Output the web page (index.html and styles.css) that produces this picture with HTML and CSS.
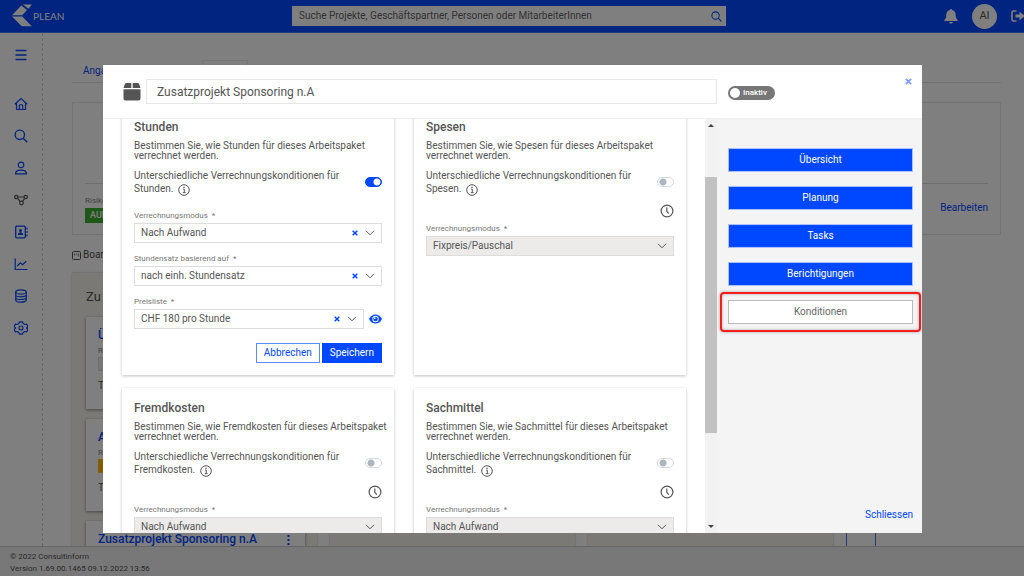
FILE: index.html
```html
<!DOCTYPE html>
<html lang="de">
<head>
<meta charset="utf-8">
<title>PLEAN</title>
<link rel="stylesheet" href="styles.css">
</head>
<body>
<svg class="sprite" aria-hidden="true">
  <symbol id="chevron" viewBox="0 0 10 6"><path d="M1 .8l4 4 4-4" fill="none" stroke="currentColor"/></symbol>
  <symbol id="cross" viewBox="0 0 6 6"><path d="M.7.7l4.6 4.6M5.3.7L.7 5.3" fill="none" stroke="currentColor" stroke-width="1.5"/></symbol>
  <symbol id="info" viewBox="0 0 12 12"><circle cx="6" cy="6" r="5.3" fill="none" stroke="currentColor"/><path d="M5 5.1h1.3v3.4M4.8 8.6h2.8" fill="none" stroke="currentColor"/><circle cx="6" cy="3.3" r=".8" fill="currentColor"/></symbol>
  <symbol id="clock" viewBox="0 0 14 14"><circle cx="7" cy="7" r="5.9" fill="none" stroke="currentColor" stroke-width="1.2"/><path d="M6.8 3.4v3.9l2 2.3" fill="none" stroke="currentColor" stroke-width="1.2"/></symbol>
  <symbol id="search" viewBox="0 0 14 14"><circle cx="5.8" cy="5.8" r="4.7" fill="none" stroke="currentColor" stroke-width="1.3"/><path d="M9.2 9.2l4 4" stroke="currentColor" stroke-width="1.4"/></symbol>
</svg>
<div class="app">
  <header class="topbar">
    <a class="brand" href="#">
      <svg class="logo" viewBox="0 0 20 24"><path d="M11 .5h9l-3.600 4.200zM9.300 1.400l5.700 4.600-4.800 5.200H0zM0 12.600h10.200l9.600 9.700H9.800z" fill="currentColor"/></svg>
      PLEAN
    </a>
    <form class="search">
      <input class="search-input" type="search" aria-label="Suche" placeholder="Suche Projekte, Geschäftspartner, Personen oder MitarbeiterInnen">
      <button class="search-button" type="button" aria-label="Suchen"><svg class="search-icon"><use href="#search"/></svg></button>
    </form>
    <div class="account">
      <button class="plain" type="button" aria-label="Benachrichtigungen"><svg class="bell" viewBox="0 0 14 15"><path d="M7 0c.6 0 1 .4 1 1 2.500.5 3.700 2.300 3.700 4.700 0 3 .8 4 1.800 5 .4.500.200 1.300-.6 1.300H1.100c-.8 0-1-.8-.6-1.300 1-1 1.800-2 1.800-5C2.300 3.300 3.500 1.500 6 1c0-.6.400-1 1-1zM5.200 13h3.600c-.2 2-3.400 2-3.600 0z" fill="currentColor"/></svg></button>
      <button class="avatar" type="button">AI</button>
      <button class="plain" type="button" aria-label="Abmelden"><svg class="logout" viewBox="0 0 13 12"><path d="M5.500 1H2.200C1.500 1 1 1.500 1 2.200v7.600c0 .7.500 1.200 1.200 1.200h3.300" fill="none" stroke="currentColor" stroke-width="1.600"/><path d="M4.500 4.500h4V1.700L14 6l-5.500 4.300V7.500h-4z" fill="currentColor"/></svg></button>
    </div>
  </header>
  <div class="workspace">
    <nav class="sidebar" aria-label="Hauptmenü">
      <a class="nav-item nav-menu" href="#" aria-label="Menü"><svg class="nav-icon" viewBox="0 0 14 14"><path d="M1.500 2.500h11M1.500 7h11M1.500 11.500h11" stroke="currentColor" stroke-width="1.300"/></svg></a>
      <a class="nav-item" href="#" aria-label="Start"><svg class="nav-icon" viewBox="0 0 14 14"><path d="M.8 7.200L7 1.500l6.200 5.700M2.500 6v6.500h9V6M5.300 12.500V9c0-2 3.400-2 3.400 0v3.500" fill="none" stroke="currentColor" stroke-width="1.200"/></svg></a>
      <a class="nav-item" href="#" aria-label="Suche"><svg class="nav-icon"><use href="#search"/></svg></a>
      <a class="nav-item" href="#" aria-label="Personen"><svg class="nav-icon" viewBox="0 0 14 14"><circle cx="7" cy="3.900" r="2.800" fill="none" stroke="currentColor" stroke-width="1.200"/><path d="M1.500 12.900c0-5 11-5 11 0z" fill="none" stroke="currentColor" stroke-width="1.200" stroke-linejoin="round"/></svg></a>
      <a class="nav-item nav-muted" href="#" aria-label="Prozesse"><svg class="nav-icon" viewBox="0 0 14 14"><g fill="none" stroke="currentColor" stroke-width="1.200"><circle cx="2.300" cy="4" r="1.700"/><circle cx="11.700" cy="4" r="1.700"/><circle cx="7.500" cy="10" r="1.800"/><path d="M4.200 4h5.600M3.600 5.300l2.700 3.300M10.600 5.300L8.600 8.500"/></g></svg></a>
      <a class="nav-item" href="#" aria-label="Kontakte"><svg class="nav-icon" viewBox="0 0 14 14"><rect x="1.700" y="1.200" width="9.600" height="11.600" rx="1" fill="none" stroke="currentColor" stroke-width="1.300"/><circle cx="6.500" cy="5.400" r="1.500" fill="currentColor"/><path d="M3.800 10c0-3.800 5.400-3.800 5.400 0z" fill="currentColor"/><path d="M13 2.500v2M13 6v2M13 9.500v2" stroke="currentColor" stroke-width="1.200"/></svg></a>
      <a class="nav-item" href="#" aria-label="Berichte"><svg class="nav-icon" viewBox="0 0 14 14"><path d="M1.200 1.500v11h12.300M3.300 9l3-3.200 2.200 1.800 3.800-3.400" fill="none" stroke="currentColor" stroke-width="1.200"/></svg></a>
      <a class="nav-item" href="#" aria-label="Daten"><svg class="nav-icon" viewBox="0 0 14 14"><g fill="none" stroke="currentColor" stroke-width="1.200"><ellipse cx="7" cy="3" rx="5.300" ry="2.200"/><path d="M1.700 3v8c0 2.800 10.600 2.800 10.600 0V3M1.700 5.700c0 2.800 10.600 2.800 10.600 0M1.700 8.400c0 2.800 10.600 2.800 10.600 0"/></g></svg></a>
      <a class="nav-item" href="#" aria-label="Einstellungen"><svg class="nav-icon" viewBox="0 0 14 14"><path d="M5.500.8h3l.6 1.800 1.600.9 1.900-.5 1.200 2.600L12.500 7l1.300 1.400-1.200 2.600-1.900-.5-1.600.9-.6 1.800h-3l-.6-1.800-1.600-.9-1.900.5L.2 8.400 1.500 7 .2 5.600 1.400 3l1.900.5 1.600-.9z" fill="none" stroke="currentColor" stroke-width="1.200" stroke-linejoin="round"/><circle cx="7" cy="7" r="2" fill="none" stroke="currentColor" stroke-width="1.200"/></svg></a>
    </nav>
    <main class="project">
      <div class="tabs"><a class="tab" href="#">Angaben</a><span class="tab-active"></span></div>
      <section class="summary">
        <div class="summary-space"></div>
        <div class="summary-row">
          <div><div class="risk-label">Risiko</div><div class="badge">AUF</div></div>
          <a class="edit" href="#">Bearbeiten</a>
        </div>
      </section>
      <div class="board-title"><svg class="board-icon" viewBox="0 0 9 9"><rect x=".5" y=".5" width="8" height="8" rx="1" fill="none" stroke="currentColor"/><path d="M2.700 2.500v2M4.500 2.500v1M6.300 2.500v3" stroke="currentColor" stroke-width=".8"/></svg>Board</div>
      <div class="board">
        <div class="lane">
          <h2 class="lane-title">Zu tun</h2>
          <article class="task"><a class="task-title" href="#">Ü</a><span class="task-risk">R</span><span class="chip"></span><span class="task-note">T</span></article>
          <article class="task"><a class="task-title" href="#">A</a><span class="task-risk">R</span><span class="chip chip-warn"></span><span class="task-note">T</span></article>
          <article class="task"><a class="task-title" href="#">Zusatzprojekt Sponsoring n.A</a><svg class="dots" viewBox="0 0 3 10"><path d="M.5 0h2v2h-2zM.5 4h2v2h-2zM.5 8h2v2h-2z" fill="currentColor"/></svg></article>
        </div>
        <div class="lane"></div>
        <div class="lane"></div>
        <div class="add-lane"></div>
      </div>
    </main>
  </div>
  <footer class="footer"><div>© 2022 Consultinform</div><div>Version 1.69.00.1465 09.12.2022 13:56</div></footer>
</div>

<div class="backdrop">
  <div class="dialog" role="dialog" aria-modal="true" aria-label="Arbeitspaket">
    <header class="dialog-head">
      <svg class="package" viewBox="0 0 18 18"><path d="M3.500 0h4.800v5H.5L1.800 1.300C2.100.5 2.700 0 3.500 0zM9.700 0h4.800c.8 0 1.400.5 1.700 1.300L17.500 5H9.700zM.5 6.200h17v9.300c0 1.300-.8 2-2 2h-13c-1.200 0-2-.7-2-2z" fill="currentColor"/></svg>
      <input class="name-input" type="text" aria-label="Name" value="Zusatzprojekt Sponsoring n.A">
      <label class="status"><input class="status-input" type="checkbox">Inaktiv</label>
      <button class="plain close" type="button" aria-label="Dialog schliessen"><svg class="cross-large"><use href="#cross"/></svg></button>
    </header>
    <div class="dialog-body">
      <div class="scroll-area">
        <div class="cards">
          <section class="card">
            <h3 class="card-title">Stunden</h3>
            <p class="card-text">Bestimmen Sie, wie Stunden für dieses Arbeitspaket verrechnet werden.</p>
            <div class="option"><label class="option-label" for="t1">Unterschiedliche Verrechnungskonditionen für Stunden. <svg class="info"><use href="#info"/></svg></label><input class="switch" id="t1" type="checkbox" checked></div>
            <div class="field">
              <label class="field-label" for="s1">Verrechnungsmodus&nbsp; *</label>
              <div class="combo"><select class="combo-select" id="s1"><option>Nach Aufwand</option></select><button class="plain" type="button" aria-label="Leeren"><svg class="cross"><use href="#cross"/></svg></button><svg class="chevron"><use href="#chevron"/></svg></div>
            </div>
            <div class="field">
              <label class="field-label" for="s2">Stundensatz basierend auf&nbsp; *</label>
              <div class="combo"><select class="combo-select" id="s2"><option>nach einh. Stundensatz</option></select><button class="plain" type="button" aria-label="Leeren"><svg class="cross"><use href="#cross"/></svg></button><svg class="chevron"><use href="#chevron"/></svg></div>
            </div>
            <div class="field">
              <label class="field-label" for="s3">Preisliste&nbsp; *</label>
              <div class="combo-row">
                <div class="combo"><select class="combo-select" id="s3"><option>CHF 180 pro Stunde</option></select><button class="plain" type="button" aria-label="Leeren"><svg class="cross"><use href="#cross"/></svg></button><svg class="chevron"><use href="#chevron"/></svg></div>
                <button class="plain" type="button" aria-label="Preisliste anzeigen"><svg class="eye" viewBox="0 0 13 10"><path d="M0 5C2.800-1 10.200-1 13 5 10.200 11 2.800 11 0 5z" fill="currentColor"/><circle cx="6.500" cy="5" r="3.200" fill="#fff"/><circle cx="6.500" cy="5" r="2.300" fill="currentColor"/><circle cx="5.700" cy="4.200" r=".9" fill="#fff"/></svg></button>
              </div>
            </div>
            <div class="actions"><button class="button button-outline" type="button">Abbrechen</button><button class="button" type="button">Speichern</button></div>
          </section>
          <section class="card">
            <h3 class="card-title">Spesen</h3>
            <p class="card-text">Bestimmen Sie, wie Spesen für dieses Arbeitspaket verrechnet werden.</p>
            <div class="option"><label class="option-label" for="t2">Unterschiedliche Verrechnungskonditionen für Spesen. <svg class="info"><use href="#info"/></svg></label><input class="switch" id="t2" type="checkbox"></div>
            <div class="history"><svg class="clock"><use href="#clock"/></svg></div>
            <div class="field">
              <label class="field-label" for="s4">Verrechnungsmodus&nbsp; *</label>
              <div class="combo combo-disabled"><select class="combo-select" id="s4" disabled><option>Fixpreis/Pauschal</option></select><svg class="chevron"><use href="#chevron"/></svg></div>
            </div>
          </section>
          <section class="card">
            <h3 class="card-title">Fremdkosten</h3>
            <p class="card-text">Bestimmen Sie, wie Fremdkosten für dieses Arbeitspaket verrechnet werden.</p>
            <div class="option"><label class="option-label" for="t3">Unterschiedliche Verrechnungskonditionen für Fremdkosten. <svg class="info"><use href="#info"/></svg></label><input class="switch" id="t3" type="checkbox"></div>
            <div class="history"><svg class="clock"><use href="#clock"/></svg></div>
            <div class="field">
              <label class="field-label" for="s5">Verrechnungsmodus&nbsp; *</label>
              <div class="combo combo-disabled"><select class="combo-select" id="s5" disabled><option>Nach Aufwand</option></select><svg class="chevron"><use href="#chevron"/></svg></div>
            </div>
          </section>
          <section class="card">
            <h3 class="card-title">Sachmittel</h3>
            <p class="card-text">Bestimmen Sie, wie Sachmittel für dieses Arbeitspaket verrechnet werden.</p>
            <div class="option"><label class="option-label" for="t4">Unterschiedliche Verrechnungskonditionen für Sachmittel. <svg class="info"><use href="#info"/></svg></label><input class="switch" id="t4" type="checkbox"></div>
            <div class="history"><svg class="clock"><use href="#clock"/></svg></div>
            <div class="field">
              <label class="field-label" for="s6">Verrechnungsmodus&nbsp; *</label>
              <div class="combo combo-disabled"><select class="combo-select" id="s6" disabled><option>Nach Aufwand</option></select><svg class="chevron"><use href="#chevron"/></svg></div>
            </div>
          </section>
        </div>
      </div>
      <div class="scrollbar" aria-hidden="true"><span class="arrow arrow-up"></span><span class="track-before"></span><span class="thumb"></span><span class="track-after"></span><span class="arrow arrow-down"></span></div>
      <aside class="side">
        <button class="side-button" type="button">Übersicht</button>
        <button class="side-button" type="button">Planung</button>
        <button class="side-button" type="button">Tasks</button>
        <button class="side-button" type="button">Berichtigungen</button>
        <div class="highlight"><button class="side-button side-current" type="button">Konditionen</button></div>
        <a class="dismiss" href="#">Schliessen</a>
      </aside>
    </div>
  </div>
</div>
</body>
</html>
```
FILE: styles.css
```css
* { box-sizing: border-box; }
body {
  margin: 0;
  font: 10px/12px Roboto, "Liberation Sans", sans-serif;
  color: #555;
  background: #fff;
  overflow: hidden;
}
a { color: #0048ff; text-decoration: none; }
svg { display: block; flex: none; }
button, input, select { font: inherit; color: inherit; margin: 0; }
.sprite { display: none; }
.plain { padding: 0; border: 0; background: none; flex: none; }

.app { height: 100vh; display: flex; flex-direction: column; }
.topbar {
  flex: none;
  display: grid;
  grid-template-columns: 292px 1fr 298px;
  align-items: center;
  height: 33px;
  background: #0048ff;
  border-bottom: 1px solid #3c78ff;
}
.brand { display: flex; align-items: center; gap: 1px; padding-left: 12px; color: #fff; font: 10px/14px Lato, sans-serif; }
.logo { width: 20px; height: 24px; }
.search { display: flex; height: 20px; background: #fff; }
.search-input { flex: 1; min-width: 0; padding: 0 7px; border: 0; background: none; appearance: none; }
.search-input::placeholder { color: #666; opacity: 1; }
.search-button { width: 20px; padding: 0 0 0 5px; border: 0; background: none; color: #0048ff; }
.search-icon { width: 11px; height: 11px; }
.search-icon use, .nav-icon use { transform-box: fill-box; }
.account { display: flex; align-items: center; justify-content: flex-end; gap: 14px; color: #fff; overflow: hidden; }
.bell { width: 14px; height: 15px; }
.avatar { width: 25px; height: 25px; padding: 0; border: 0; border-radius: 50%; background: #fff; color: #555; font-size: 11px; }
.logout { width: 13px; height: 12px; }

.workspace { flex: 1; min-height: 0; display: flex; }
.sidebar { flex: none; width: 43px; display: flex; flex-direction: column; gap: 18px; padding: 15px 14px; border-right: 1px dashed #ccc; }
.nav-item { display: block; }
.nav-menu { margin-bottom: 17px; }
.nav-muted { color: #555; }
.nav-icon { width: 14px; height: 14px; }
.project { flex: 1; min-width: 0; padding: 27px 23px 0 29px; overflow: hidden; }
.tabs { display: flex; height: 23px; border-bottom: 1px solid #e2e2e2; }
.tab { width: 130px; padding: 5px 11px; }
.tab-active { width: 46px; border: 1px solid #ececec; border-bottom: 0; }
.summary { margin-top: 19px; height: 133px; padding: 0 12px; border: 1px solid #e6e6e6; }
.summary-space { height: 81px; border-bottom: 1px solid #ddd; }
.summary-row { display: flex; justify-content: space-between; align-items: flex-start; padding-top: 10px; }
.risk-label { color: #888; font-size: 8px; line-height: 14px; }
.badge { width: 60px; padding: 0 5px; background: #3faf2e; color: #fff; font-size: 9px; line-height: 15px; font-weight: 500; }
.edit { padding-top: 8px; }
.board-title { display: flex; align-items: center; gap: 2px; height: 12px; margin-top: 14px; }
.board-icon { width: 9px; height: 9px; }
.board { display: grid; grid-template-columns: repeat(3, 245px) 30px; gap: 13px; margin-top: 12px; height: 300px; }
.lane { padding: 14px 12px 0 14px; background: #f5f2eb; box-shadow: 0 0 2px #bbb; }
.lane-title { margin: 0 0 10px; font-size: 13px; line-height: 20px; font-weight: 400; }
.task { position: relative; display: grid; grid-template-rows: 16px 14px 14px 1fr; align-content: start; height: 92px; margin-bottom: 10px; padding: 10px 12px; background: #fff; box-shadow: 0 1px 3px #888; }
.task-title { font-size: 12px; line-height: 16px; font-weight: 500; }
.task-risk { padding-top: 2px; color: #888; font-size: 8px; }
.chip { width: 80px; background: #eee; border: 1px solid #ddd; }
.chip-warn { background: #fb0; border-color: #fb0; }
.task-note { padding-top: 9px; }
.dots { position: absolute; top: 14px; right: 15px; width: 3px; height: 10px; color: #0048ff; }
.add-lane { border: solid #4c78ee; border-width: 0 1px; }
.footer { flex: none; height: 30px; padding: 4px 10px; border-top: 1px solid #ccc; background: #f0f0f0; color: #555; font-size: 8px; }

.backdrop { position: fixed; inset: 0; padding: 65px 102px 43px 103px; background: rgba(0, 0, 0, .5); display: flex; }
.dialog { flex: 1; min-width: 0; display: flex; flex-direction: column; background: #fff; overflow: hidden; }
.dialog-head { flex: none; height: 54px; display: flex; align-items: center; padding: 0 10px 0 20px; border-bottom: 1px solid #eee; }
.package { width: 18px; height: 18px; margin-right: 5px; }
.name-input { flex: 1; min-width: 0; height: 25px; padding: 0 10px; border: 1px solid #e6e6e6; font-size: 12px; }
.status { display: flex; align-items: center; gap: 3px; width: 47px; height: 14px; margin: 2px 130px 0 11px; padding-left: 2px; border-radius: 7px; background: #777; color: #fff; font-size: 8px; font-weight: 500; }
.status-input { appearance: none; width: 10px; height: 10px; border-radius: 50%; background: #fff; }
.close { color: #7da0ff; margin-bottom: 20px; }
.cross-large { width: 7px; height: 7px; }
.dialog-body { flex: 1; min-height: 0; display: flex; }
.scroll-area { flex: 1; min-width: 0; overflow: hidden; }
.cards { display: grid; grid-template-columns: 1fr 1fr; grid-template-rows: auto auto; gap: 13px 20px; margin-top: -12px; padding: 0 19px; }
.card { min-width: 0; padding: 12px; box-shadow: 0 1px 3px rgba(0, 0, 0, .25); }
.card-title { margin: 0 0 6px; font-size: 12px; line-height: 16px; font-weight: 500; }
.card-text { margin: 0 -10px 8px 0; line-height: 10px; }
.option { display: flex; align-items: center; justify-content: space-between; gap: 20px; height: 26px; }
.option-label { flex: 1; max-width: 210px; line-height: 13px; }
.info { display: inline-block; width: 12px; height: 12px; margin: 0 0 -4px 2px; }
.switch { appearance: none; flex: none; width: 17px; height: 10px; border: 1px solid #d5dae0; border-radius: 5px; background: radial-gradient(circle at 5px 4px, #adb5bd 3px, transparent 4px) #fff; }
.switch:checked { border-color: #0048ff; background: radial-gradient(circle at 11px 4px, #fff 3px, transparent 4px) #0048ff; }
.history { display: flex; justify-content: flex-end; margin: 9px 0 -10px; }
.clock { width: 14px; height: 14px; }
.field { margin-top: 15px; }
.field + .field { margin-top: 10px; }
.field-label { display: block; margin-bottom: 1px; color: #777; font-size: 8px; }
.combo { flex: 1; display: flex; align-items: center; height: 20px; padding: 0 6px; border: 1px solid #ddd; }
.combo-select { flex: 1; min-width: 0; appearance: none; border: 0; padding: 0; background: none; opacity: 1; }
.combo-disabled { background: #ecebea; }
.cross { width: 6px; height: 6px; color: #0048ff; }
.chevron { width: 10px; height: 6px; margin-left: 7px; }
.combo-row { display: flex; align-items: center; gap: 5px; }
.eye { width: 13px; height: 10px; color: #0048ff; }
.actions { display: flex; justify-content: flex-end; gap: 2px; margin-top: 14px; }
.button { height: 20px; padding: 0 7px; border: 1px solid #0048ff; background: #0048ff; color: #fff; }
.button-outline { border-color: #5c8aff; background: #fff; color: #0048ff; }

.scrollbar { flex: none; width: 12px; display: flex; flex-direction: column; align-items: center; background: #f1f1f1; }
.arrow { border: 3px solid transparent; }
.arrow-up { margin: 2px 0 5px; border-bottom-color: #444; }
.arrow-down { margin: 5px 0 2px; border-top-color: #444; }
.track-before { flex: 45; }
.thumb { flex: 257; width: 12px; background: #c1c1c1; }
.track-after { flex: 87; }
.side { flex: none; width: 205px; display: flex; flex-direction: column; gap: 14px; padding: 29px 9px 12px 11px; background: #f4f4f4; }
.side-button { width: 100%; height: 24px; flex: none; padding: 0; border: 1px solid #a9c0ff; background: #0048ff; color: #fff; }
.side-current { border-color: #bbb; background: #fff; color: #666; }
.highlight { position: relative; height: 24px; }
.highlight::after { content: ""; position: absolute; inset: -8px; border: 2px solid #f41c1c; border-radius: 4px; box-shadow: 0 0 3px #999, inset 0 0 3px #aaa; pointer-events: none; }
.dismiss { align-self: flex-end; margin-top: auto; }
```
